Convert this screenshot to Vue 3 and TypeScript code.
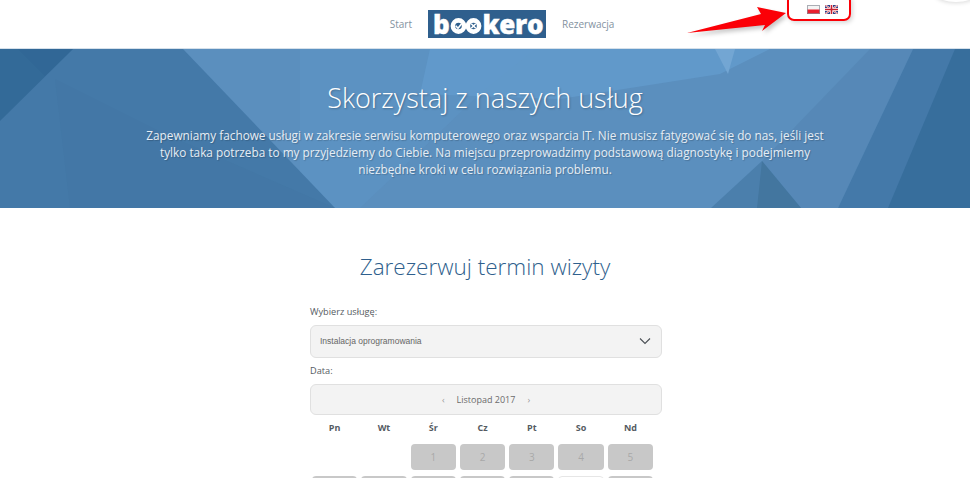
<script setup lang="ts">
const weekdays = ["Pn", "Wt", "Śr", "Cz", "Pt", "So", "Nd"]

interface Day {
  label: string
  state: "empty" | "off" | "free"
}

// the second row is cut by the bottom of the window, so no numbers there
const days: Day[] = [
  { label: "", state: "empty" },
  { label: "", state: "empty" },
  ...[1, 2, 3, 4, 5].map((n): Day => ({ label: String(n), state: "off" })),
  ...[6, 7, 8, 9, 10].map((): Day => ({ label: "", state: "off" })),
  { label: "", state: "free" },
  { label: "", state: "off" },
]
</script>

<template>
  <div class="page">
    <header class="top">
      <nav class="nav">
        <a class="nav-link nav-start">Start</a>
        <div class="logo" aria-label="bookero">
          <span>b</span>
          <svg class="logo-oo" viewBox="0 0 32 16" width="32" height="16" aria-hidden="true">
            <circle cx="8.5" cy="8" r="5.6" fill="none" stroke="#fff" stroke-width="4.6" />
            <circle cx="23.5" cy="8" r="5.6" fill="none" stroke="#fff" stroke-width="4.6" />
            <path d="M5.8 7.8l2.2 2.4 3.6-4.4" fill="none" stroke="#fff" stroke-width="1.6" />
            <path d="M21.2 5.7l4.6 4.6m0-4.6l-4.6 4.6" fill="none" stroke="#fff" stroke-width="1.6" />
          </svg>
          <span>kero</span>
        </div>
        <a class="nav-link">Rezerwacja</a>
      </nav>

      <div class="flags">
        <svg width="13" height="9" viewBox="0 0 13 9" aria-label="Polski">
          <rect width="13" height="4.5" fill="#f4f4f4" />
          <rect y="4.5" width="13" height="4.5" fill="#e8202f" />
          <rect x=".5" y=".5" width="12" height="8" fill="none" stroke="#8a8f98" stroke-opacity=".7" />
        </svg>
        <svg width="13" height="9" viewBox="0 0 13 9" aria-label="English">
          <rect width="13" height="9" fill="#2b3f86" />
          <path d="M0 0l13 9M13 0L0 9" stroke="#fff" stroke-width="1.8" />
          <path d="M0 0l13 9M13 0L0 9" stroke="#c8202f" stroke-width=".7" />
          <path d="M6.5 0v9M0 4.5h13" stroke="#fff" stroke-width="3" />
          <path d="M6.5 0v9M0 4.5h13" stroke="#c8202f" stroke-width="1.6" />
        </svg>
      </div>
      <div class="flag-mark"></div>
      <svg class="arrow" width="110" height="40" viewBox="0 0 110 40" aria-hidden="true">
        <polygon points="2,33 76,14 72,7 101,13 77,31 80,25" fill="#fb0007" />
      </svg>
      <div class="corner"></div>
    </header>

    <section class="hero">
      <svg class="hero-bg" viewBox="0 0 970 159" preserveAspectRatio="none" aria-hidden="true">
        <rect width="970" height="159" fill="#5b8fbe" />
        <polygon points="300,0 535,0 485,40 360,159 300,159" fill="#6097c8" opacity=".4" />
        <polygon points="430,0 770,0 720,25 560,50 420,45" fill="#649cce" opacity=".7" />
        <polygon points="715,0 735,0 728,25" fill="#73a6d3" />
        <polygon points="0,0 183,0 335,159 0,159" fill="#4479a8" />
        <polygon points="0,0 73,0 0,72" fill="#336a98" />
        <polygon points="18,0 73,0 45,27" fill="#2f6393" opacity=".4" />
        <polygon points="55,30 165,85 335,159 70,159" fill="#3f749f" opacity=".25" />
        <polygon points="762,112 870,0 913,0 838,159 801,159" fill="#5283b1" opacity=".55" />
        <polygon points="711,159 762,112 801,159" fill="#4b7fac" />
        <polygon points="757,159 762,112 801,159" fill="#43769f" />
        <polygon points="838,159 913,0 970,0 970,159" fill="#4479a9" />
        <polygon points="888,159 955,0 970,0 970,159" fill="#376e9c" />
      </svg>
      <div class="hero-inner">
        <h1>Skorzystaj z naszych usług</h1>
        <p>
          Zapewniamy fachowe usługi w zakresie serwisu komputerowego oraz wsparcia IT. Nie musisz fatygować się do nas, jeśli jest
          tylko taka potrzeba to my przyjedziemy do Ciebie. Na miejscu przeprowadzimy podstawową diagnostykę i podejmiemy
          niezbędne kroki w celu rozwiązania problemu.
        </p>
      </div>
    </section>

    <main class="booking">
      <h2>Zarezerwuj termin wizyty</h2>
      <form class="form" @submit.prevent>
        <label class="label">Wybierz usługę:</label>
        <div class="select">
          <span>Instalacja oprogramowania</span>
          <svg width="12" height="8" viewBox="0 0 12 8" aria-hidden="true">
            <path d="M1 1.5l5 5 5-5" fill="none" stroke="#4a4f55" stroke-width="1.1" />
          </svg>
        </div>
        <label class="label label-date">Data:</label>
        <div class="month">
          <span class="chev">‹</span>
          <span>Listopad 2017</span>
          <span class="chev">›</span>
        </div>
        <div class="weekdays">
          <span v-for="d in weekdays" :key="d">{{ d }}</span>
        </div>
        <div class="days">
          <div
            v-for="(d, i) in days"
            :key="i"
            class="day"
            :class="d.state"
          >{{ d.label }}</div>
        </div>
      </form>
    </main>
  </div>
</template>

<style>
html,
body {
  margin: 0;
  background: #fff;
  overflow: hidden;
}
</style>

<style scoped>
.page {
  font-family: "Open Sans", sans-serif;
  height: 478px;
  overflow: hidden;
  color: #555;
}

.top {
  position: relative;
  height: 48px;
  background: #fff;
  border-bottom: 1px solid #d5e0ea;
}

.nav {
  display: grid;
  grid-template-columns: 1fr 118px 1fr;
  column-gap: 16px;
  align-items: center;
  height: 48px;
  padding-left: 4px;
}

.nav-link {
  font-size: 10px;
  color: #84929f;
}

.nav-start {
  justify-self: end;
}

.logo {
  display: flex;
  align-items: center;
  box-sizing: border-box;
  height: 28px;
  margin-top: -1px;
  padding-left: 5px;
  background: #2f5f8d;
  color: #fff;
  font-size: 26px;
  font-weight: 800;
  line-height: 28px;
  letter-spacing: -0.3px;
  -webkit-text-stroke: 0.4px #fff;
}

.logo-oo {
  margin: 4px 0 0 1px;
  flex: none;
}

.flags {
  position: absolute;
  top: 5px;
  left: 807px;
  display: flex;
  gap: 5px;
}

.flags svg {
  display: block;
}

.flag-mark {
  position: absolute;
  left: 787px;
  top: -6px;
  width: 60px;
  height: 23px;
  border: 2px solid #fb0007;
  border-radius: 7px;
  box-shadow: 2px 2px 4px rgba(0, 0, 0, 0.15);
}

.arrow {
  position: absolute;
  left: 685px;
  top: 0;
  filter: drop-shadow(2px 3px 2px rgba(0, 0, 0, 0.22));
}

.corner {
  position: absolute;
  right: -6px;
  top: -14px;
  width: 40px;
  height: 16px;
  border-radius: 50%;
  background: #fff;
  box-shadow: 0 1px 4px rgba(0, 0, 0, 0.15);
}

.hero {
  position: relative;
  height: 159px;
  overflow: hidden;
  color: #fff;
}

.hero-bg {
  position: absolute;
  inset: 0;
  width: 100%;
  height: 100%;
}

.hero-inner {
  position: relative;
  box-sizing: border-box;
  width: 700px;
  margin: 0 auto;
  padding-top: 28px;
  text-align: center;
}

.hero h1 {
  margin: 0;
  font-size: 27px;
  font-weight: 300;
  line-height: 42px;
  text-shadow: 1px 1px 2px rgba(0, 0, 0, 0.25);
}

.hero p {
  margin: 8px 0 0;
  font-size: 11.8px;
  line-height: 17px;
  color: #e6edf4;
  text-shadow: 1px 1px 1px rgba(0, 0, 0, 0.2);
}

.booking {
  background: #fff;
}

.booking h2 {
  margin: 0;
  padding-top: 42px;
  font-size: 22.5px;
  font-weight: 300;
  line-height: 34px;
  text-align: center;
  color: #2f5f8d;
}

.form {
  width: 352px;
  margin: 21px 308px 0 310px;
}

.label {
  display: block;
  font-size: 9.2px;
  font-weight: 500;
  line-height: 14px;
  color: #555b62;
}

.select {
  display: flex;
  align-items: center;
  justify-content: space-between;
  box-sizing: border-box;
  height: 33px;
  margin-top: 6px;
  padding: 0 10px 2px 9px;
  background: #f3f3f3;
  border: 1px solid #e0e0e0;
  border-radius: 6px;
  font-family: "Liberation Sans", sans-serif;
  font-size: 8.5px;
  color: #666;
}

.label-date {
  margin-top: 6px;
}

.month {
  display: flex;
  align-items: center;
  justify-content: center;
  gap: 12px;
  box-sizing: border-box;
  height: 31px;
  margin-top: 6px;
  background: #f3f3f3;
  border: 1px solid #e0e0e0;
  border-radius: 6px;
  font-size: 9px;
  color: #6b6b6b;
}

.chev {
  color: #999;
}

.weekdays,
.days {
  display: grid;
  grid-template-columns: repeat(7, 49.3px);
}

.weekdays {
  height: 29px;
  font-size: 9px;
  font-weight: 700;
  line-height: 25px;
  text-align: center;
  color: #555b62;
}

.days {
  row-gap: 6px;
}

.day {
  box-sizing: border-box;
  height: 26px;
  margin: 0 2px;
  border-radius: 4px;
  font-size: 10px;
  line-height: 26px;
  text-align: center;
}

.day.off {
  background: #c8c8c8;
  color: #a8a8a8;
}

.day.free {
  background: #fff;
  border: 1px solid #e6e6e6;
}
</style>
